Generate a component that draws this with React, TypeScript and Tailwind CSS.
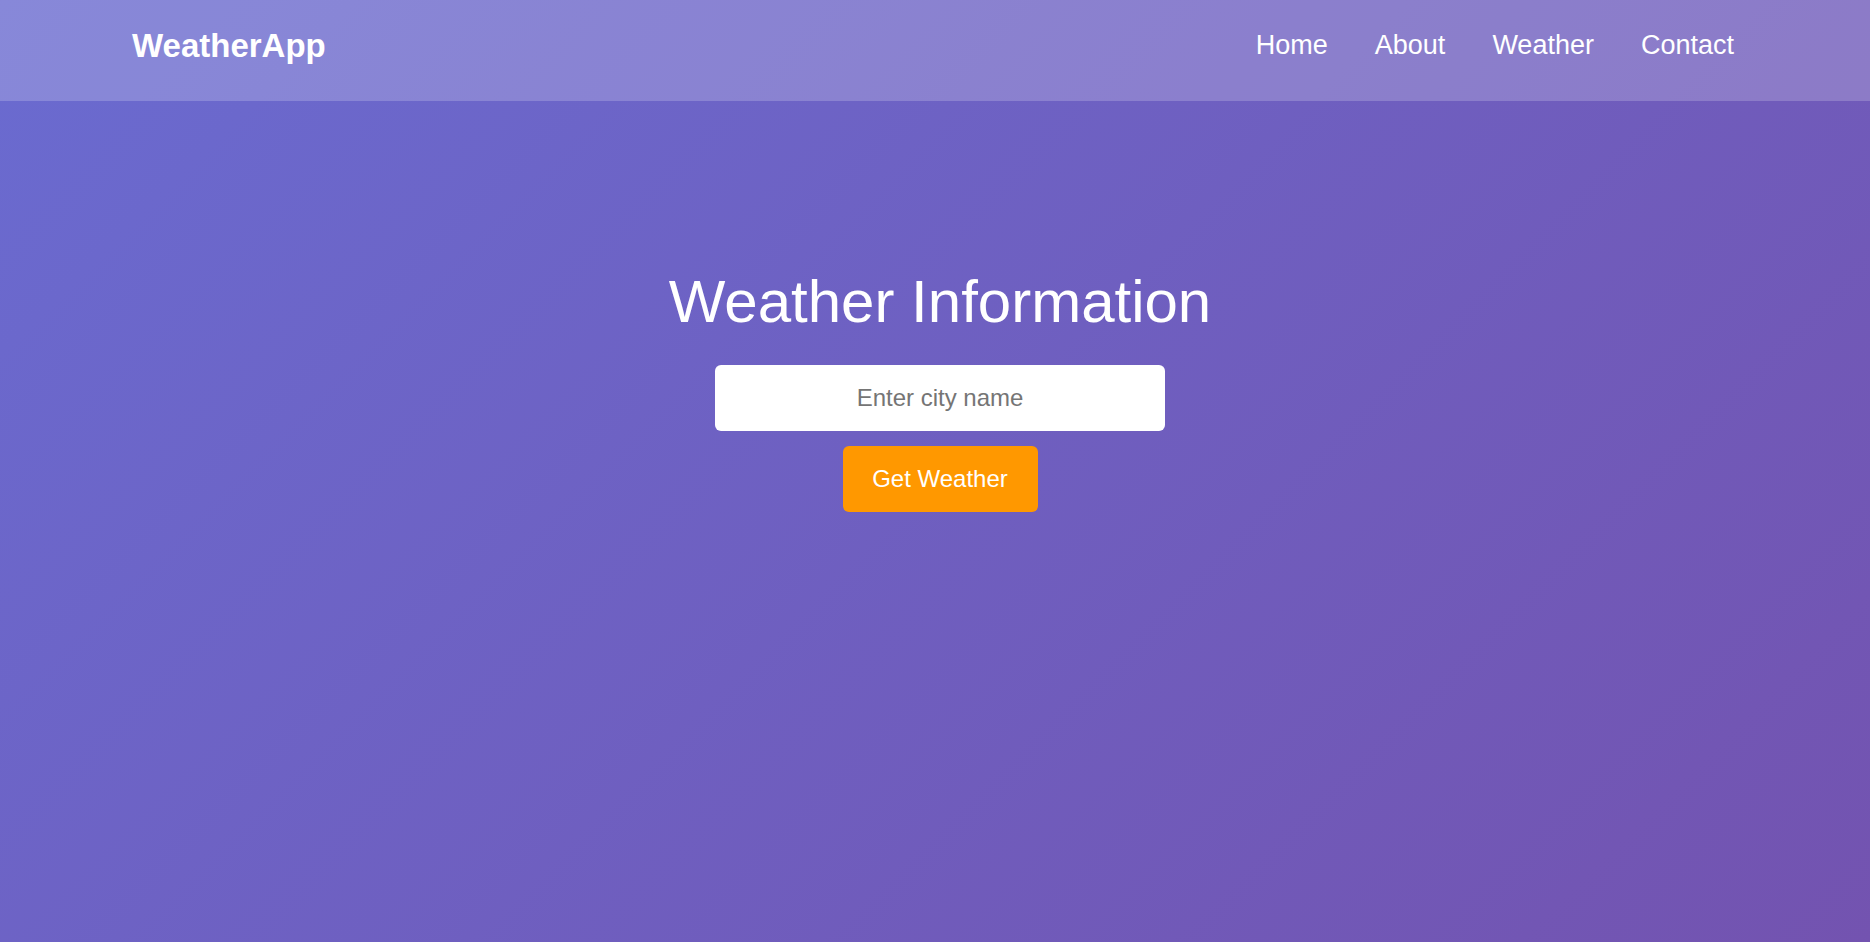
import { useState } from "react";

const links = ["Home", "About", "Weather", "Contact"];

export default function App() {
  const [city, setCity] = useState("");

  return (
    <div className="min-h-screen w-full bg-[linear-gradient(135deg,#6a6bd0_0%,#7353b0_100%)] font-['Liberation_Sans',Arial,sans-serif] text-white">
      {/* Navbar */}
      <header className="flex h-[101px] items-center justify-between bg-white/20 pb-[10px] pl-[132px] pr-[136px]">
        <div className="text-[33px] font-bold leading-none">WeatherApp</div>
        <nav className="flex items-center gap-[47px]">
          {links.map((link) => (
            <a key={link} href="#" className="text-[27px] leading-none text-white">
              {link}
            </a>
          ))}
        </nav>
      </header>

      {/* Search */}
      <main className="flex flex-col items-center pl-[10px] pt-[166px]">
        <h1 className="text-[60px] font-normal leading-[69px]">Weather Information</h1>
        <input
          type="text"
          value={city}
          onChange={(e) => setCity(e.target.value)}
          placeholder="Enter city name"
          className="mt-[29px] h-[66px] w-[450px] rounded-[6px] bg-white text-center text-[24px] text-gray-800 outline-none placeholder:text-[#757575]"
        />
        <button className="mt-[15px] h-[66px] w-[195px] rounded-[6px] bg-[#ff9800] text-[24px] text-white">
          Get Weather
        </button>
      </main>
    </div>
  );
}
